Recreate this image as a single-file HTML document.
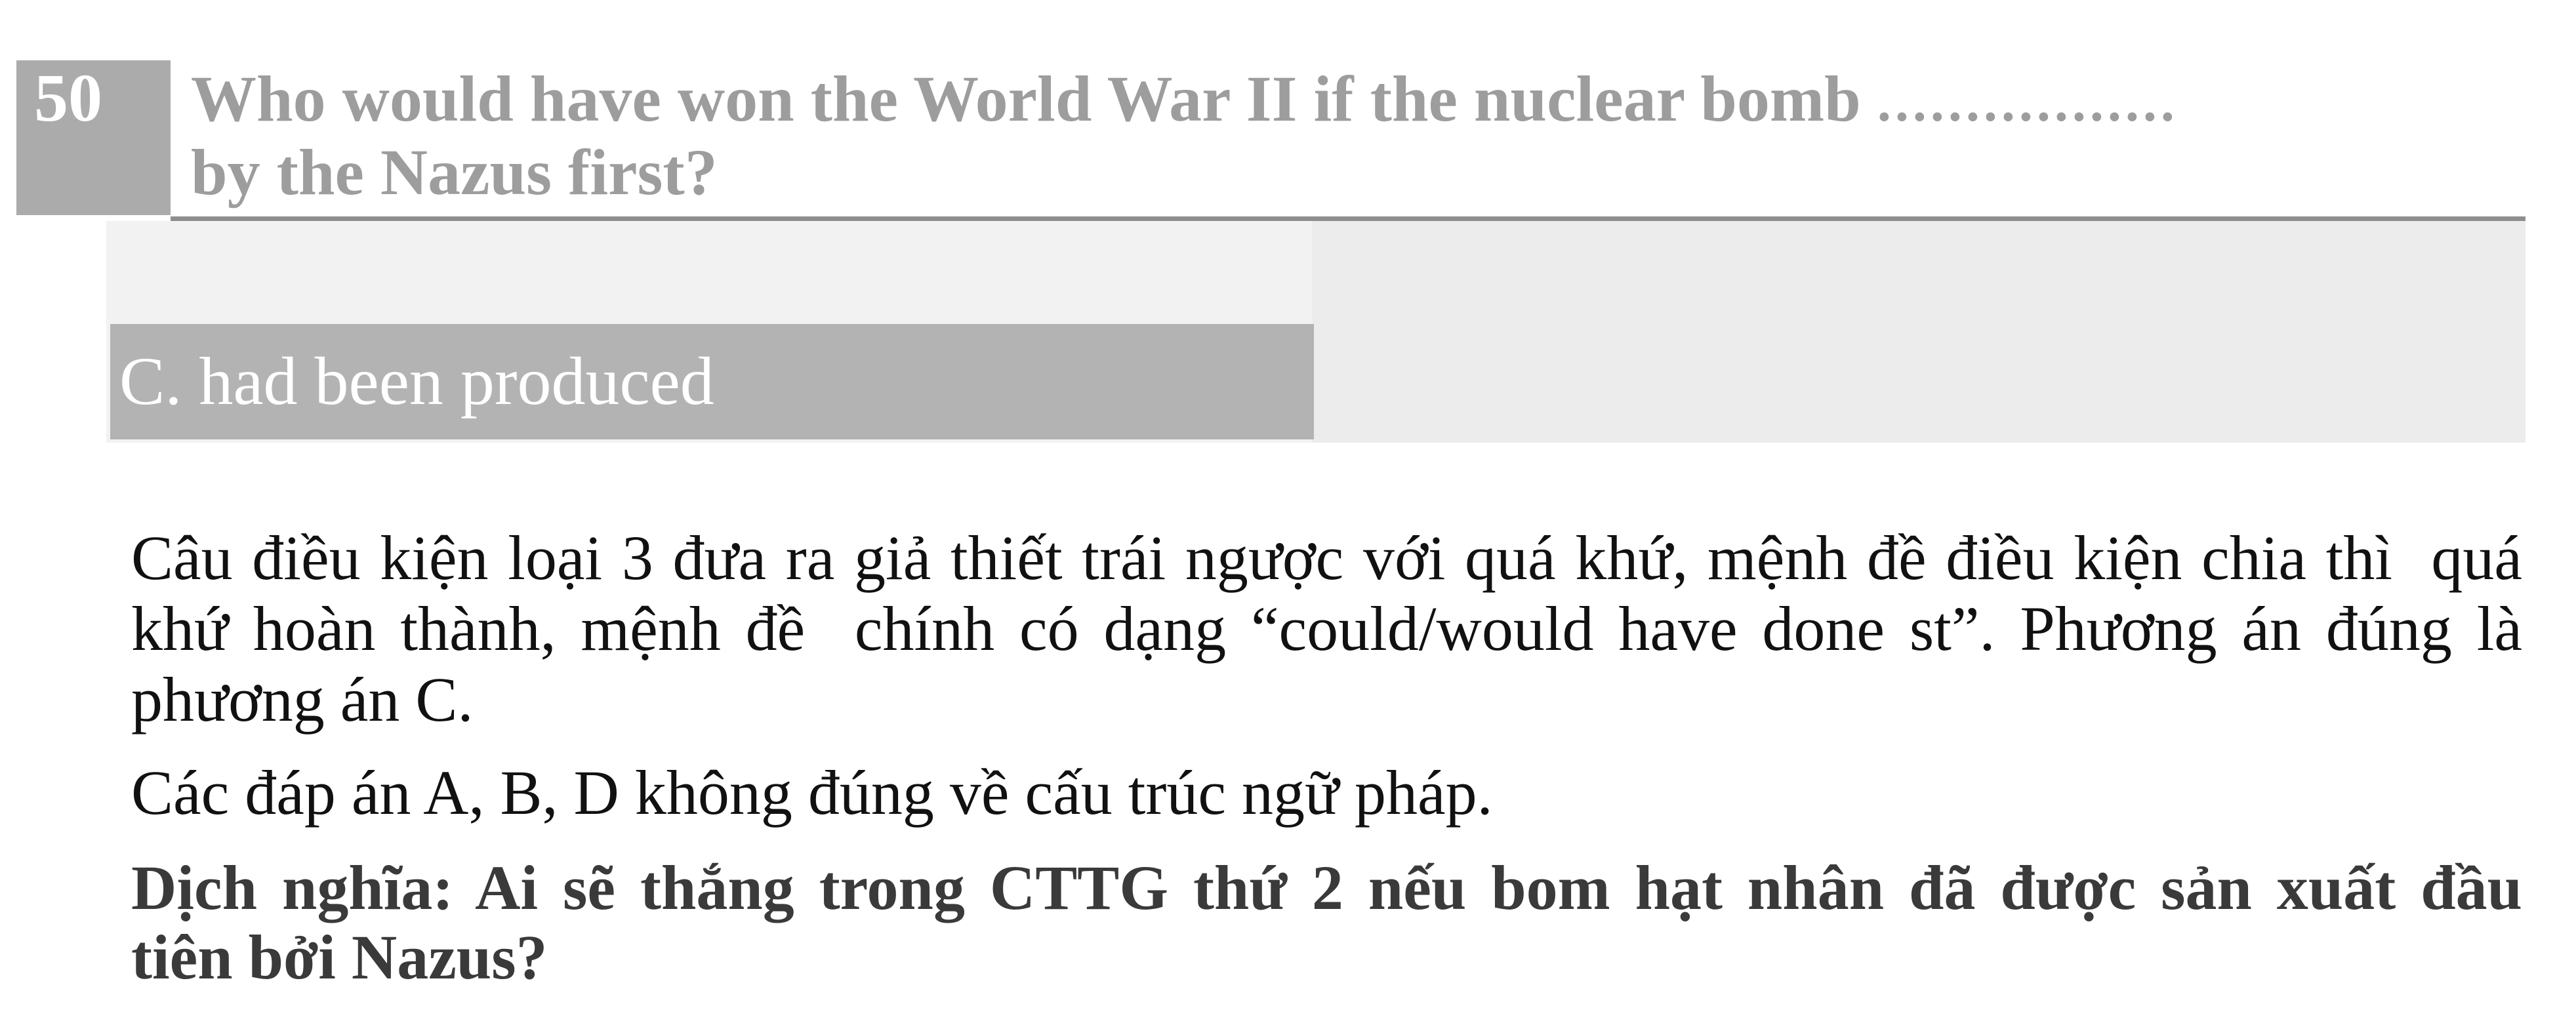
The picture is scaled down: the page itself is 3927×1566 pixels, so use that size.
<!DOCTYPE html>
<html><head><meta charset="utf-8"><style>
html,body{margin:0;padding:0;background:#fff;width:3927px;height:1566px;overflow:hidden;position:relative}
div{position:absolute}
.t{font-family:"Liberation Serif",serif;white-space:nowrap}
.j{left:200px;width:3645px;font-size:96px;line-height:108px;color:#111;text-align:justify;text-align-last:justify;white-space:normal}
.b{font-weight:bold;color:#3a3a3a}
</style></head><body>
<div style="left:25px;top:92px;width:235px;height:236px;background:#ababab"></div>
<div class="t" style="left:52px;top:95px;font-size:104px;line-height:110px;font-weight:bold;color:#fff">50</div>
<div class="t" style="left:291px;top:98px;font-size:100px;line-height:106px;font-weight:bold;color:#9d9d9d">Who would have won the World War II if the nuclear bomb <span style="font-size:84px;letter-spacing:6px">.................</span><br>by the Nazus first?</div>
<div style="left:260px;top:330px;width:3590px;height:7px;background:#8e8e8e"></div>
<div style="left:162px;top:337px;width:3688px;height:338px;background:#f2f2f2"></div>
<div style="left:2000px;top:337px;width:1850px;height:338px;background:#ececec"></div>
<div style="left:168px;top:494px;width:1835px;height:176px;background:#b3b3b3"></div>
<div class="t" style="left:182px;top:524px;font-size:104px;line-height:115px;color:#fff">C. had been produced</div>
<div class="t j" style="top:797px">Câu điều kiện loại 3 đưa ra giả thiết trái ngược với quá khứ, mệnh đề điều kiện chia thì&nbsp; quá</div>
<div class="t j" style="top:905px">khứ hoàn thành, mệnh đề&nbsp; chính có dạng “could/would have done st”. Phương án đúng là</div>
<div class="t j" style="top:1013px;text-align-last:left">phương án C.</div>
<div class="t j" style="top:1155px;text-align-last:left">Các đáp án A, B, D không đúng về cấu trúc ngữ pháp.</div>
<div class="t j b" style="top:1300px">Dịch nghĩa: Ai sẽ thắng trong CTTG thứ 2 nếu bom hạt nhân đã được sản xuất đầu</div>
<div class="t j b" style="top:1406px;text-align-last:left">tiên bởi Nazus?</div>
</body></html>
